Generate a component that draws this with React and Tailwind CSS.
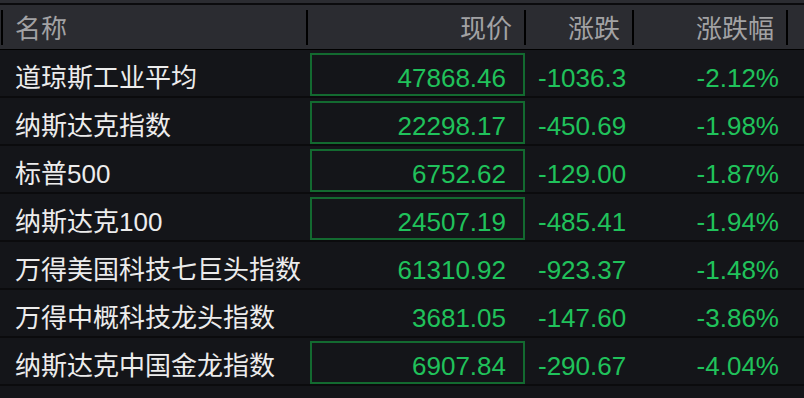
import React from 'react'

const rows = [
  { name: '道琼斯工业平均', price: '47868.46', chg: '-1036.3', pct: '-2.12%', boxed: true },
  { name: '纳斯达克指数', price: '22298.17', chg: '-450.69', pct: '-1.98%', boxed: true },
  { name: '标普500', price: '6752.62', chg: '-129.00', pct: '-1.87%', boxed: true },
  { name: '纳斯达克100', price: '24507.19', chg: '-485.41', pct: '-1.94%', boxed: true },
  { name: '万得美国科技七巨头指数', price: '61310.92', chg: '-923.37', pct: '-1.48%', boxed: false },
  { name: '万得中概科技龙头指数', price: '3681.05', chg: '-147.60', pct: '-3.86%', boxed: false },
  { name: '纳斯达克中国金龙指数', price: '6907.84', chg: '-290.67', pct: '-4.04%', boxed: true },
]

const cols = 'grid grid-cols-[308px_218px_108px_154px_16px]'

function Divider() {
  return <span className="w-[2px] h-[35px] bg-black shrink-0" />
}

export default function App() {
  return (
    <div
      className="w-[804px] h-[398px] overflow-hidden bg-[#141519] text-[26px] leading-none"
      style={{ fontFamily: '"Liberation Sans", "Noto Sans CJK SC", sans-serif' }}
    >
      <div className="h-[3px] bg-[#2b2c31]" />
      <div className="h-[2px] bg-[#0b0b0d]" />
      <div className={`${cols} h-[45px] bg-[#2b2c31] border-b-[1px] border-black text-[#a2a2a4]`}>
        <div className="flex items-center">
          <span className="ml-[1px] flex"><Divider /></span>
          <span className="ml-[12px] flex-1 pt-[3px]">名称</span>
          <Divider />
        </div>
        <div className="flex items-center justify-end">
          <span className="mr-[12px] pt-[3px]">现价</span>
          <Divider />
        </div>
        <div className="flex items-center justify-end">
          <span className="mr-[12px] pt-[3px]">涨跌</span>
          <Divider />
        </div>
        <div className="flex items-center justify-end">
          <span className="mr-[12px] pt-[3px]">涨跌幅</span>
          <Divider />
        </div>
        <div />
      </div>

      {rows.map(r => (
        <div key={r.name} className={`${cols} h-[48px] border-b-2 border-[#0b0b0d]`}>
          <div className="flex items-center pl-[15px] pt-[9px] text-[#ececec]">{r.name}</div>
          <div className="pt-[3px] pl-[2px] pr-[1px]">
            <div
              className={`h-[43px] flex items-center justify-end pr-[17px] pt-[6px] text-[#20c25b] border-2 ${r.boxed ? 'border-[#136a30]' : 'border-transparent'}`}
            >
              {r.price}
            </div>
          </div>
          <div className="flex items-center pl-[12px] pt-[9px] text-[#20c25b]">{r.chg}</div>
          <div className="flex items-center justify-end pr-[9px] pt-[9px] text-[#20c25b]">{r.pct}</div>
          <div />
        </div>
      ))}
    </div>
  )
}
